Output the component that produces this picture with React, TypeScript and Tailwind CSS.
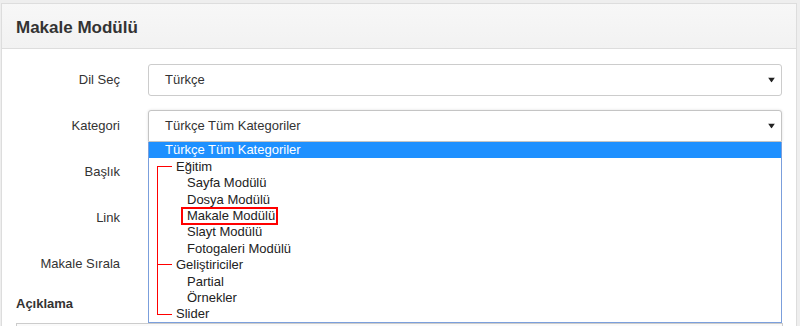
import React from "react";

const font = { fontFamily: '"Liberation Sans", Arial, sans-serif' };
const RED = "#ff0000";

function Arrow() {
  return (
    <svg width="7" height="5" viewBox="0 0 7 5" className="absolute right-[7px] top-1/2 -translate-y-1/2">
      <path d="M0 0 H7 L3.5 5 Z" fill="#222" />
    </svg>
  );
}

function Row({ label, children }: { label: string; children?: React.ReactNode }) {
  return (
    <div className="flex items-center h-[32px] mb-[14px]">
      <div className="w-[104px] text-right text-[13px] text-[#333]">{label}</div>
      <div className="ml-[28px] w-[634px] h-[32px] relative">{children}</div>
    </div>
  );
}

const items: { t: string; lvl: 1 | 2; mark?: boolean }[] = [
  { t: "Eğitim", lvl: 1 },
  { t: "Sayfa Modülü", lvl: 2 },
  { t: "Dosya Modülü", lvl: 2 },
  { t: "Makale Modülü", lvl: 2, mark: true },
  { t: "Slayt Modülü", lvl: 2 },
  { t: "Fotogaleri Modülü", lvl: 2 },
  { t: "Geliştiriciler", lvl: 1 },
  { t: "Partial", lvl: 2 },
  { t: "Örnekler", lvl: 2 },
  { t: "Slider", lvl: 1 },
];

function Item({ t, lvl, mark }: { t: string; lvl: 1 | 2; mark?: boolean }) {
  if (lvl === 1) {
    return (
      <div className="flex items-center h-[16.4px] whitespace-nowrap">
        <div className="ml-[8px] w-[15px] h-px" style={{ background: RED }} />
        <span className="ml-[4px]">{t}</span>
      </div>
    );
  }
  return (
    <div className="flex items-center h-[16.4px] whitespace-nowrap">
      {mark ? (
        <span className="ml-[32px] h-[18px] pl-[4px] pr-[1px] border-2 flex items-center" style={{ borderColor: RED }}>
          {t}
        </span>
      ) : (
        <span className="ml-[38px]">{t}</span>
      )}
    </div>
  );
}

export default function App() {
  return (
    <div className="w-[800px] h-[326px] overflow-hidden bg-[#eeeeee] pt-[3px] pl-[1px]" style={font}>
      <div className="w-[796px] h-[400px] border border-[#dddddd] bg-white">
        <div className="h-[45px] bg-gradient-to-b from-[#f7f7f7] to-[#f2f2f2] border-b border-[#dddddd] flex items-center pl-[14px] pt-[2px]">
          <span className="text-[17px] font-bold text-[#333] leading-none">Makale Modülü</span>
        </div>
        <div className="pl-[14px] pt-[15px]">
          <Row label="Dil Seç">
            <div className="h-full border border-[#cccccc] rounded-[3px] bg-white flex items-center pl-[16px] text-[13px] text-[#333]">
              Türkçe
            </div>
            <Arrow />
          </Row>
          <Row label="Kategori">
            <div className="h-full border border-[#c4c4c4] rounded-t-[3px] bg-white flex items-center pl-[16px] text-[13px] text-[#333] shadow-[0_0_3px_rgba(0,0,0,0.12)]">
              Türkçe Tüm Kategoriler
            </div>
            <Arrow />
            <div className="absolute left-0 top-[32px] w-[634px] z-10 bg-white border border-t-0 border-[#7b9fdc] text-[13px] text-[#222] flex flex-col">
              <div className="h-[16.4px] leading-[16.4px] bg-[#1e90ff] text-white pl-[16px] whitespace-nowrap">
                Türkçe Tüm Kategoriler
              </div>
              <div className="relative flex flex-col">
                <div className="absolute left-[8px] top-[8px] w-px h-[148px]" style={{ background: RED }} />
                {items.map((it, i) => (
                  <Item key={i} {...it} />
                ))}
              </div>
            </div>
          </Row>
          <Row label="Başlık" />
          <Row label="Link" />
          <Row label="Makale Sırala" />
          <div className="text-[13px] font-bold text-[#333] mt-[10px]">Açıklama</div>
          <div className="mt-[9px] w-[767px] h-[40px] border border-[#cccccc] bg-[#fafafa]" />
        </div>
      </div>
    </div>
  );
}
